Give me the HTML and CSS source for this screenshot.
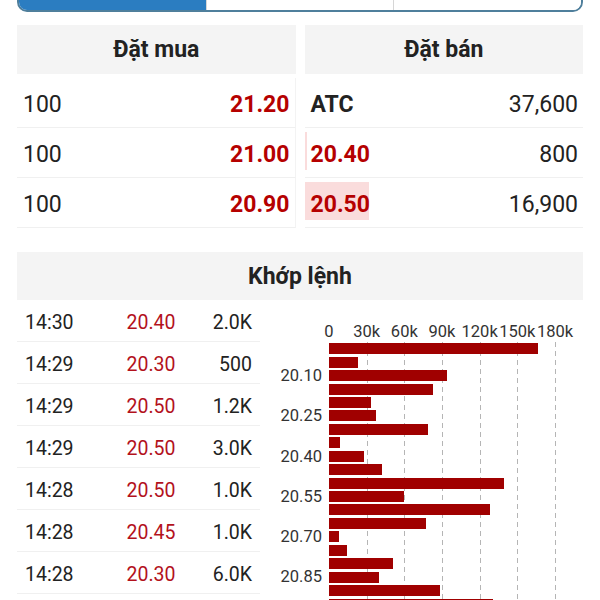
FILE: index.html
```html
<!DOCTYPE html>
<html lang="vi">
<head>
  <meta charset="UTF-8">
  <meta name="viewport" content="width=device-width, initial-scale=1.0">
  <title>Sổ lệnh</title>
  <link rel="stylesheet" href="styles.css">
</head>
<body>
<div class="tabs">
  <div class="tab active"></div>
  <div class="tab"></div>
  <div class="tab"></div>
</div>

<!-- Order book -->
<section class="book">
  <div class="book-side buy">
    <div class="section-head">Đặt mua</div>
    <div class="book-row"><span class="qty">100</span><span class="price">21.20</span></div>
    <div class="book-row"><span class="qty">100</span><span class="price">21.00</span></div>
    <div class="book-row"><span class="qty">100</span><span class="price">20.90</span></div>
  </div>
  <div class="book-side sell">
    <div class="section-head">Đặt bán</div>
    <div class="book-row"><span class="price atc">ATC</span><span class="qty">37,600</span></div>
    <div class="book-row"><span class="vol-bar" style="width: 2px"></span><span class="price">20.40</span><span class="qty">800</span></div>
    <div class="book-row"><span class="vol-bar" style="width: 64px"></span><span class="price">20.50</span><span class="qty">16,900</span></div>
  </div>
</section>

<!-- Matched trades -->
<div class="section-head match-head">Khớp lệnh</div>
<section class="match">
  <div class="trades">
    <div class="trade"><span>14:30</span><span class="trade-price">20.40</span><span class="trade-vol">2.0K</span></div>
    <div class="trade"><span>14:29</span><span class="trade-price">20.30</span><span class="trade-vol">500</span></div>
    <div class="trade"><span>14:29</span><span class="trade-price">20.50</span><span class="trade-vol">1.2K</span></div>
    <div class="trade"><span>14:29</span><span class="trade-price">20.50</span><span class="trade-vol">3.0K</span></div>
    <div class="trade"><span>14:28</span><span class="trade-price">20.50</span><span class="trade-vol">1.0K</span></div>
    <div class="trade"><span>14:28</span><span class="trade-price">20.45</span><span class="trade-vol">1.0K</span></div>
    <div class="trade"><span>14:28</span><span class="trade-price">20.30</span><span class="trade-vol">6.0K</span></div>
  </div>

  <div class="chart">
    <div class="axis">
      <span style="left: 0%">0</span>
      <span style="left: 16.667%">30k</span>
      <span style="left: 33.333%">60k</span>
      <span style="left: 50%">90k</span>
      <span style="left: 66.667%">120k</span>
      <span style="left: 83.333%">150k</span>
      <span style="left: 100%">180k</span>
    </div>
    <div class="plot">
      <div class="grid">
        <i style="left: 16.667%"></i>
        <i style="left: 33.333%"></i>
        <i style="left: 50%"></i>
        <i style="left: 66.667%"></i>
        <i style="left: 83.333%"></i>
        <i style="left: 100%"></i>
      </div>

      <div class="bar-row"><span class="bar-label"></span><span class="bar" style="width: 92.5%"></span></div>
      <div class="bar-row"><span class="bar-label"></span><span class="bar" style="width: 12.8%"></span></div>
      <div class="bar-row"><span class="bar-label">20.10</span><span class="bar" style="width: 52.3%"></span></div>
      <div class="bar-row"><span class="bar-label"></span><span class="bar" style="width: 46.2%"></span></div>
      <div class="bar-row"><span class="bar-label"></span><span class="bar" style="width: 18.4%"></span></div>
      <div class="bar-row"><span class="bar-label">20.25</span><span class="bar" style="width: 20.6%"></span></div>
      <div class="bar-row"><span class="bar-label"></span><span class="bar" style="width: 43.8%"></span></div>
      <div class="bar-row"><span class="bar-label"></span><span class="bar" style="width: 4.7%"></span></div>
      <div class="bar-row"><span class="bar-label">20.40</span><span class="bar" style="width: 15.6%"></span></div>
      <div class="bar-row"><span class="bar-label"></span><span class="bar" style="width: 23.5%"></span></div>
      <div class="bar-row"><span class="bar-label"></span><span class="bar" style="width: 77.6%"></span></div>
      <div class="bar-row"><span class="bar-label">20.55</span><span class="bar" style="width: 33.3%"></span></div>
      <div class="bar-row"><span class="bar-label"></span><span class="bar" style="width: 71.1%"></span></div>
      <div class="bar-row"><span class="bar-label"></span><span class="bar" style="width: 42.8%"></span></div>
      <div class="bar-row"><span class="bar-label">20.70</span><span class="bar" style="width: 4.6%"></span></div>
      <div class="bar-row"><span class="bar-label"></span><span class="bar" style="width: 8%"></span></div>
      <div class="bar-row"><span class="bar-label"></span><span class="bar" style="width: 28.3%"></span></div>
      <div class="bar-row"><span class="bar-label">20.85</span><span class="bar" style="width: 22.1%"></span></div>
      <div class="bar-row"><span class="bar-label"></span><span class="bar" style="width: 49.1%"></span></div>
      <div class="bar-row"><span class="bar-label"></span><span class="bar" style="width: 72.4%"></span></div>
    </div>
  </div>
</section>
</body>
</html>
```

FILE: styles.css
```css
body {
  font-family: Roboto, 'Noto Sans', sans-serif;
  margin: 0;
  padding: 0 17px;
  background: #fff;
  color: #222;
  overflow: hidden;
}

/* Segmented tabs, scrolled mostly out of view */
.tabs {
  display: flex;
  height: 42px;
  margin-top: -30px;
  border: 2px solid #4f7f9c;
  border-radius: 10px;
  overflow: hidden;
  box-sizing: border-box;
}

.tab {
  flex: 1;
  background: #fff;
}

.tab + .tab {
  border-left: 1px solid #d6d6d6;
}

.tab.active {
  background: #2b7dc1;
}

/* Headers shared by both sections */
.section-head {
  height: 49px;
  display: flex;
  align-items: center;
  justify-content: center;
  background: #f4f4f4;
  font-size: 23px;
  font-weight: 700;
  color: #222;
}

.book {
  display: grid;
  grid-template-columns: 1fr 1fr;
  column-gap: 9px;
  margin-top: 13px;
}

.book .section-head {
  margin-bottom: 4px;
}

.book-row {
  position: relative;
  height: 50px;
  display: flex;
  align-items: center;
  justify-content: space-between;
  padding: 4px 5px 0 6px;
  border-bottom: 1px solid #f0f0f0;
  box-sizing: border-box;
  font-size: 23px;
}

.buy .book-row {
  border-right: 1px solid #f3f3f3;
}

.price {
  position: relative;
  font-weight: 700;
  color: #b50000;
}

.price.atc {
  color: #222;
}

.qty {
  position: relative;
}

.vol-bar {
  position: absolute;
  left: 0;
  top: 4px;
  height: 38px;
  background: #fadcdc;
}

/* Matched orders */
.match-head {
  margin-top: 24px;
  height: 48px;
}

.match {
  display: grid;
  grid-template-columns: 243px 1fr;
}

.trade {
  display: grid;
  grid-template-columns: 90px 72px 1fr;
  align-items: center;
  height: 42px;
  padding: 3px 8px 0;
  border-bottom: 1px solid #f0f0f0;
  box-sizing: border-box;
  font-size: 19.5px;
}

.trade-price {
  text-align: center;
  color: #b3121c;
}

.trade-vol {
  text-align: right;
}

/* Volume by price chart */
.chart {
  padding-top: 21px;
  font-size: 16.5px;
  color: #333;
}

.axis {
  position: relative;
  height: 21px;
  width: 226px;
  margin-left: 69px;
}

.axis span {
  position: absolute;
  top: 0;
  line-height: 21px;
  transform: translateX(-50%);
}

.plot {
  position: relative;
}

.grid {
  position: absolute;
  top: 0;
  bottom: 0;
  left: 69px;
  width: 226px;
}

.grid i {
  position: absolute;
  top: 0;
  bottom: 0;
  width: 1px;
  background: repeating-linear-gradient(to bottom, #b5b5b5 0 5px, transparent 5px 9px);
}

.bar-row {
  position: relative;
  display: grid;
  grid-template-columns: 69px 226px;
  align-items: center;
  height: 13.44px;
}

.bar-label {
  text-align: right;
  padding-right: 7px;
  line-height: 13.44px;
  white-space: nowrap;
}

.bar {
  height: 11px;
  background: #a00000;
}
```
